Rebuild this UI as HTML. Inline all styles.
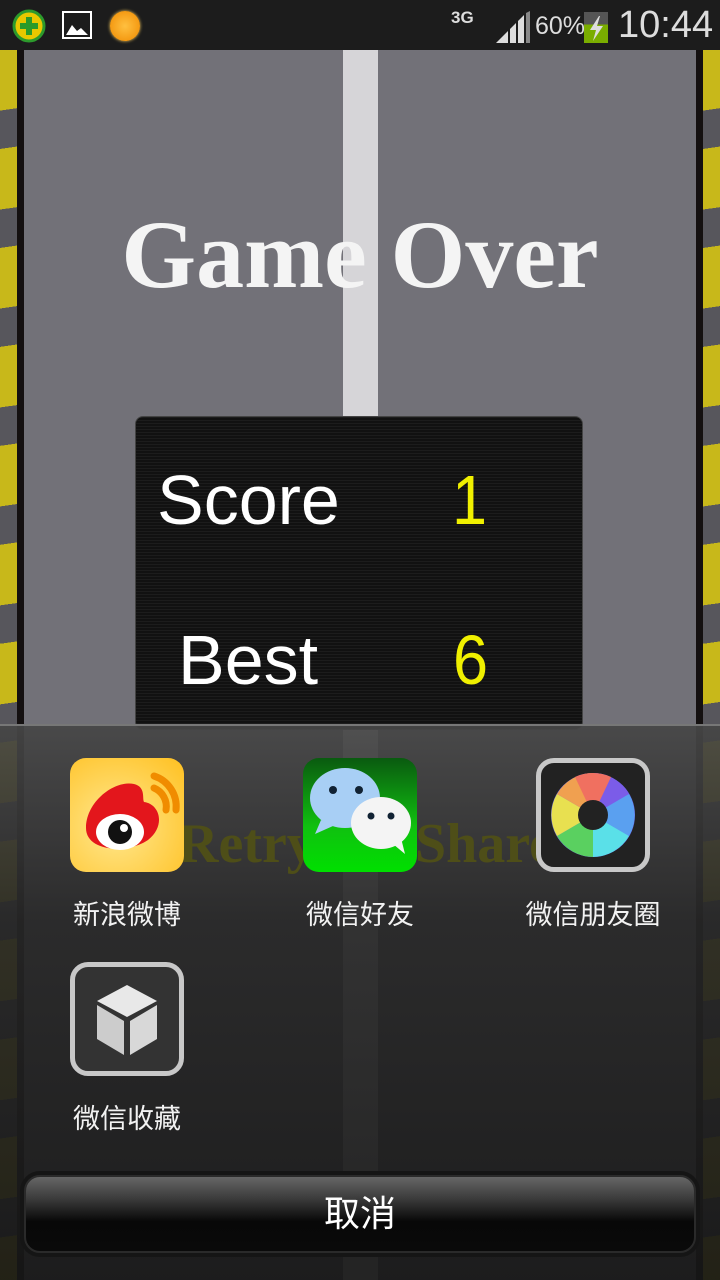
<!DOCTYPE html>
<html><head><meta charset="utf-8"><style>
*{margin:0;padding:0;box-sizing:border-box}
body{width:720px;height:1280px;overflow:hidden;background:#6f6e75;position:relative;font-family:"Liberation Sans","Noto Sans CJK SC",sans-serif}
.abs{position:absolute}
.sb{left:0;top:0;width:720px;height:50px;background:#1c1c1c}
.road{left:24px;top:50px;width:672px;height:1230px;background:#727178}
.edgeL,.edgeR{top:50px;width:24px;height:1230px;background:#141010}
.edgeL{left:0}.edgeR{right:0}
.stripe{top:50px;width:17px;height:1230px;background:repeating-linear-gradient(172deg,#c8b81a 0 60px,#57565c 60px 98px)}
.line{left:343px;top:50px;width:35px;height:1230px;background:#d6d5d8}
.go{left:0;width:720px;top:207px;line-height:1;text-align:center;color:#f4f4f4;font-family:"Liberation Serif",serif;font-weight:bold;font-size:96px}
.panel{left:135px;top:416px;width:448px;height:314px;background:#0c0c0c;border-radius:8px;border:1px solid #444;background-image:repeating-linear-gradient(0deg,#111 0 2px,#1c1c1c 2px 3px)}
.t{font-size:70px;color:#fff}
.y{font-size:70px;color:#f0f000;transform:scaleX(.9);transform-origin:left}
.ov{left:0;top:724px;width:720px;height:556px;background:linear-gradient(rgba(70,70,70,.93),rgba(38,38,38,.93) 35%,rgba(22,22,22,.93));border-top:2px solid #777}
.lbl{color:#f2f2f2;font-size:27px;width:200px;text-align:center}
.ic{width:114px;height:114px;border-radius:16px;overflow:hidden}
.btn{left:24px;top:1175px;width:672px;height:78px;border-radius:16px;background:linear-gradient(#666,#3a3a3a 30%,#080808 60%,#0a0a0a);border:2px solid #2a2a2a;box-shadow:0 0 0 4px #151515;color:#fff;font-size:36px;text-align:center;line-height:74px}
</style></head><body>
<div class="abs sb"></div>
<svg class="abs" style="left:12px;top:9px" width="34" height="34" viewBox="0 0 34 34"><circle cx="17" cy="17" r="15" fill="#e8c800"/><circle cx="17" cy="17" r="15" fill="none" stroke="#2c9a2c" stroke-width="3"/><path d="M14 8h6v6h6v6h-6v6h-6v-6H8v-6h6z" fill="#2a9a2a"/></svg>
<svg class="abs" style="left:62px;top:11px" width="30" height="28"><rect x="1" y="1" width="28" height="26" fill="none" stroke="#fff" stroke-width="2"/><path d="M4 24l6-10 5 6 4-3 7 7z" fill="#fff"/></svg>
<div class="abs" style="left:110px;top:11px;width:30px;height:30px;border-radius:50%;background:radial-gradient(#ffc040,#f08a00);box-shadow:0 0 3px #ffd060"></div>
<div class="abs" style="left:451px;top:8px;color:#ddd;font-size:17px;font-weight:bold">3G</div>
<svg class="abs" style="left:496px;top:11px" width="34" height="32"><path d="M0 32L12 20V32Z M14 18L20 12V32H14Z M22 10L28 4V32H22Z" fill="#ddd"/><path d="M30 2L34 0V32H30Z" fill="#888"/></svg>
<div class="abs" style="left:535px;top:12px;color:#ddd;font-size:25px">60%</div>
<div class="abs" style="left:584px;top:12px;width:24px;height:31px;background:linear-gradient(#555 40%,#7aad00 40%)"></div>
<svg class="abs" style="left:584px;top:12px" width="24" height="31"><path d="M15 4L6 18h6l-3 11 10-15h-6l3-10z" fill="#ddd"/></svg>
<div class="abs" style="left:618px;top:4px;color:#ddd;font-size:38px">10:44</div>
<div class="abs road"></div>
<div class="abs edgeL"></div><div class="abs edgeR"></div>
<div class="abs stripe" style="left:0"></div><div class="abs stripe" style="right:0"></div>
<div class="abs line"></div>
<div class="abs go">Game Over</div>
<div class="abs panel"></div>
<div class="abs t" style="left:157px;top:460px">Score</div>
<div class="abs y" style="left:452px;top:460px">1</div>
<div class="abs t" style="left:178px;top:620px">Best</div>
<div class="abs y" style="left:453px;top:620px">6</div>
<div class="abs ov"></div>
<div class="abs" style="left:178px;top:812px;font-family:'Liberation Serif',serif;font-weight:bold;font-size:56px;color:#4e4e18">Retry</div>
<div class="abs" style="left:415px;top:812px;font-family:'Liberation Serif',serif;font-weight:bold;font-size:56px;color:#4e4e18">Share</div>
<div class="abs ic" style="left:70px;top:758px;background:radial-gradient(circle at 40% 60%,#ffe890,#ffc020)">
<svg width="114" height="114"><path d="M16 70c0-26 28-48 48-44 12 3 8 14 10 18 16 2 22 24 4 38-20 14-62 12-62-12z" fill="#e3161c"/><ellipse cx="50" cy="74" rx="24" ry="18" fill="#fff"/><circle cx="50" cy="74" r="12" fill="#111"/><circle cx="54" cy="70" r="4" fill="#fff"/><path d="M84 30a20 20 0 0 1 12 22M84 18a32 32 0 0 1 22 34" stroke="#f08c00" stroke-width="7" fill="none" stroke-linecap="round"/></svg></div>
<div class="abs ic" style="left:303px;top:758px;background:linear-gradient(#0a5a10,#10c010 60%,#00e000)">
<svg width="114" height="114"><ellipse cx="42" cy="40" rx="35" ry="30" fill="#a8cff5"/><path d="M18 62l-6 14 18-8z" fill="#a8cff5"/><ellipse cx="78" cy="65" rx="30" ry="26" fill="#f4f4f4"/><path d="M90 86l12 10-4-16z" fill="#f4f4f4"/><circle cx="30" cy="32" r="4" fill="#123"/><circle cx="56" cy="32" r="4" fill="#123"/><circle cx="68" cy="58" r="3.5" fill="#123"/><circle cx="88" cy="58" r="3.5" fill="#123"/></svg></div>
<div class="abs ic" style="left:536px;top:758px;background:#222;border:5px solid #c8c8c8;border-radius:18px">
<svg width="104" height="104"><g transform="translate(52 52)"><circle r="42" fill="#6a6af0"/><path d="M0 0L0-42A42 42 0 0 1 36-21z" fill="#7b5ce8"/><path d="M0 0L36-21A42 42 0 0 1 36 21z" fill="#5aa0f0"/><path d="M0 0L36 21A42 42 0 0 1 0 42z" fill="#5ae0e8"/><path d="M0 0L0 42A42 42 0 0 1-36 21z" fill="#5ad060"/><path d="M0 0L-36 21A42 42 0 0 1-36-21z" fill="#e8e050"/><path d="M0 0L-36-21A42 42 0 0 1 0-42z" fill="#f0a050"/><path d="M0 0L-18-38A42 42 0 0 1 18-38z" fill="#f07060"/><circle r="15" fill="#222"/></g></svg></div>
<div class="abs ic" style="left:70px;top:962px;background:#333;border:5px solid #c8c8c8;border-radius:18px">
<svg width="104" height="104"><path d="M52 18l30 16-30 16-30-16z" fill="#e8e8e8"/><path d="M22 38l27 16v34L22 72z" fill="#ccc"/><path d="M82 38L55 54v34l27-16z" fill="#d8d8d8"/></svg></div>
<div class="abs lbl" style="left:27px;top:893px">新浪微博</div>
<div class="abs lbl" style="left:260px;top:893px">微信好友</div>
<div class="abs lbl" style="left:493px;top:893px">微信朋友圈</div>
<div class="abs lbl" style="left:27px;top:1097px">微信收藏</div>
<div class="abs btn">取消</div>
</body></html>
